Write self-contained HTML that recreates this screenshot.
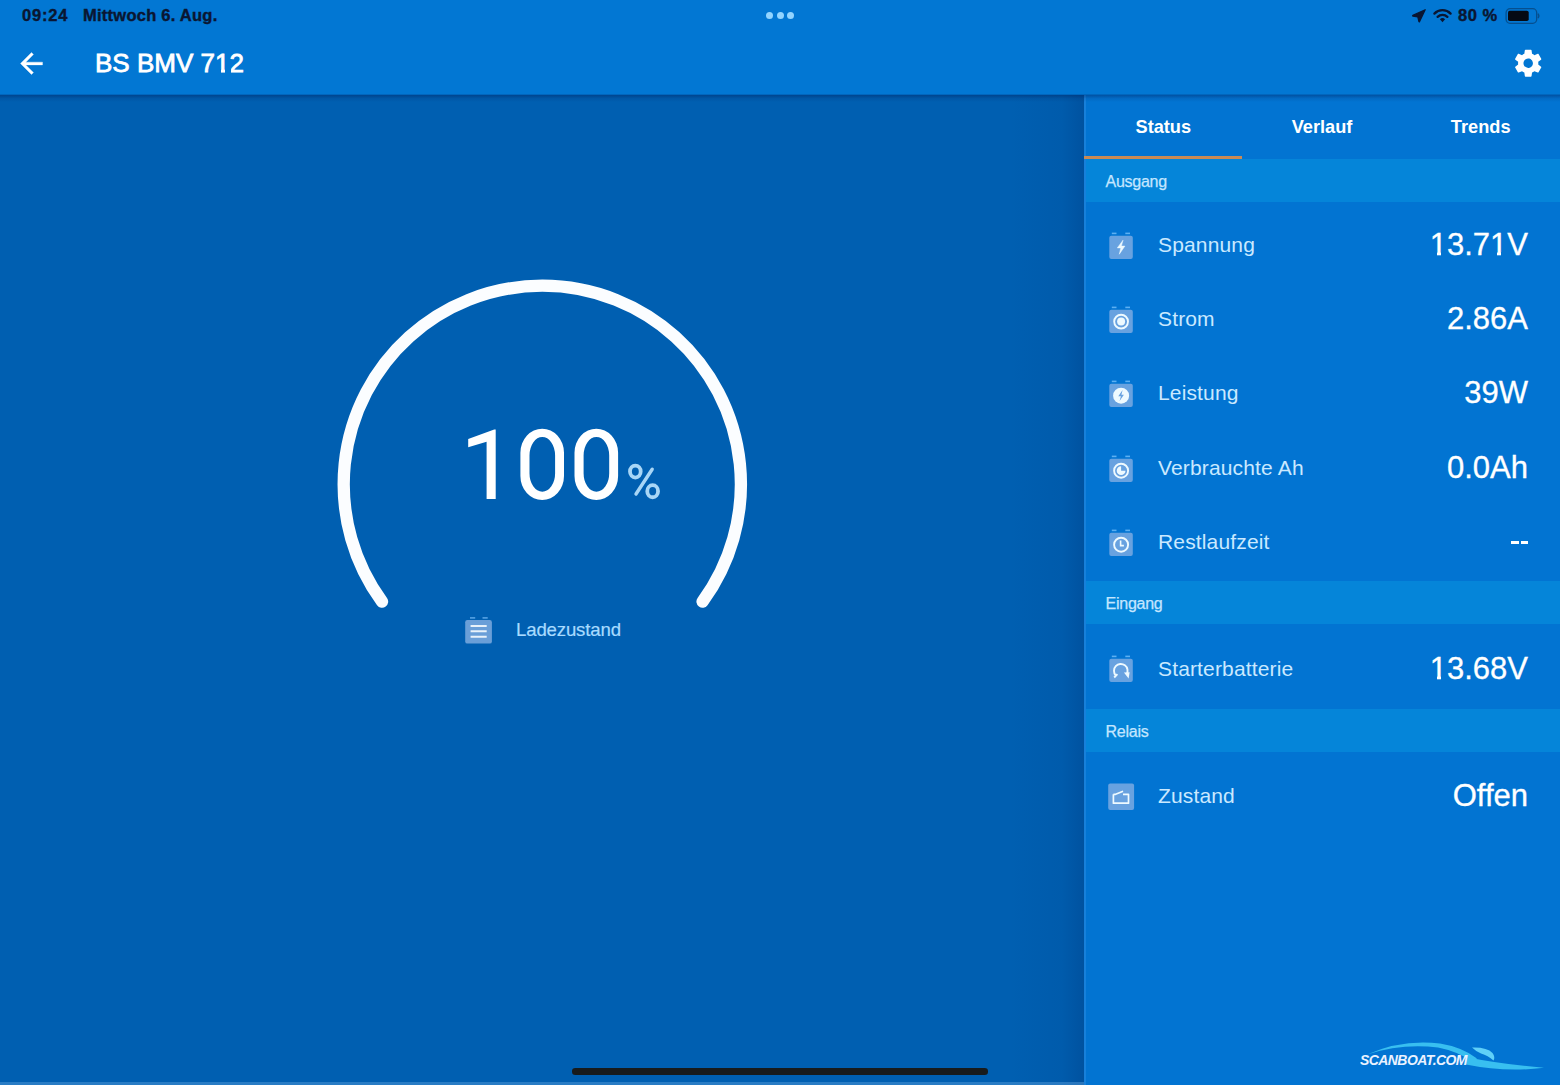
<!DOCTYPE html>
<html><head><meta charset="utf-8">
<style>
*{margin:0;padding:0;box-sizing:border-box}
html,body{width:1560px;height:1085px;overflow:hidden;background:#005fb1;font-family:"Liberation Sans",sans-serif}
.t{position:absolute;white-space:nowrap;line-height:0}
.b{position:absolute}
svg{position:absolute;overflow:visible}
</style></head><body>
<div class="b" style="left:0;top:95px;width:1084px;height:990px;background:#005fb1"></div>
<div class="b" style="left:1010px;top:95px;width:74px;height:990px;background:linear-gradient(to right,rgba(0,30,90,0),rgba(0,30,90,.06) 70%,rgba(0,30,90,.2))"></div>
<div class="b" style="left:1084px;top:95px;width:476px;height:990px;background:#0274d2"></div>
<div class="b" style="left:1084px;top:95px;width:1.5px;height:990px;background:rgba(110,180,250,.2)"></div>
<div class="b" style="left:0;top:1082px;width:1084px;height:3px;background:rgba(90,160,220,.45)"></div>
<div class="b" style="left:0;top:0;width:1560px;height:95px;background:#0277d3"></div>
<div class="b" style="left:0;top:94px;width:1560px;height:1px;background:rgba(0,30,90,.18)"></div>
<div class="b" style="left:0;top:95px;width:1560px;height:7px;background:linear-gradient(to bottom,rgba(0,30,90,.4),rgba(0,30,90,.12) 50%,rgba(0,30,90,0))"></div>
<div class="t" style="left:22px;top:15.28px;font-size:16.5px;color:#0a1632;font-weight:bold;letter-spacing:0.8px;-webkit-text-stroke:0.4px #0a1632">09:24</div>
<div class="t" style="left:83px;top:15.28px;font-size:16.5px;color:#0a1632;font-weight:bold;letter-spacing:0.25px;-webkit-text-stroke:0.4px #0a1632">Mittwoch 6. Aug.</div>
<div class="t" style="left:1458px;top:15.28px;font-size:16.5px;color:#0a1632;font-weight:bold;letter-spacing:0.5px;-webkit-text-stroke:0.4px #0a1632">80 %</div>
<div class="b" style="left:766.0px;top:12.2px;width:7px;height:7px;border-radius:50%;background:#92d4ff"></div>
<div class="b" style="left:776.5px;top:12.2px;width:7px;height:7px;border-radius:50%;background:#92d4ff"></div>
<div class="b" style="left:787.0px;top:12.2px;width:7px;height:7px;border-radius:50%;background:#92d4ff"></div>
<svg style="left:1410px;top:8px" width="18" height="16" viewBox="0 0 18 16"><path d="M15.2 1.7 L2.8 7.4 Q2.2 7.8 2.9 8.1 L7.8 8.9 L8.9 13.6 Q9.2 14.3 9.6 13.6 Z" fill="#0a1632" stroke="#0a1632" stroke-width="1.2" stroke-linejoin="round"/></svg>
<svg style="left:1432px;top:8px" width="21" height="16" viewBox="0 0 21 16"><path d="M10.5 14.2 L7.9 11.3 A3.8 3.8 0 0 1 13.1 11.3 Z" fill="#0a1632"/><path d="M5.6 8.9 A7 7 0 0 1 15.4 8.9" fill="none" stroke="#0a1632" stroke-width="2.3" stroke-linecap="round"/><path d="M2.4 5.6 A11.3 11.3 0 0 1 18.6 5.6" fill="none" stroke="#0a1632" stroke-width="2.3" stroke-linecap="round"/></svg>
<svg style="left:1504px;top:7px" width="40" height="18" viewBox="0 0 40 18"><rect x="2.1" y="1.7" width="30.6" height="14.6" rx="4" fill="none" stroke="rgba(10,30,60,.45)" stroke-width="1.3"/><rect x="4" y="3.8" width="20.7" height="10.2" rx="1.8" fill="#050a14"/><path d="M34.2 6.6 Q35.6 8.9 34.2 11.2" fill="none" stroke="rgba(10,30,60,.45)" stroke-width="1.4"/></svg>
<div class="t" style="left:95px;top:63.49px;font-size:26px;color:#fff;font-weight:normal;-webkit-text-stroke:0.8px #fff">BS BMV 712</div>
<svg style="left:14.5px;top:46.5px" width="33" height="33" viewBox="0 0 24 24"><path fill="#fff" stroke="#fff" stroke-width="0.25" d="M20 11H7.83l5.59-5.59L12 4l-8 8 8 8 1.41-1.41L7.83 13H20v-2z"/></svg>
<svg style="left:1512px;top:47.2px" width="32.4" height="32.4" viewBox="0 0 24 24"><path fill="#fff" d="M19.43 12.98c.04-.32.07-.64.07-.98s-.03-.66-.07-.98l2.11-1.65c.19-.15.24-.42.12-.64l-2-3.46c-.12-.22-.39-.3-.61-.22l-2.49 1c-.52-.4-1.08-.73-1.69-.98l-.38-2.65C14.460 2.18 14.25 2 14 2h-4c-.25 0-.46.18-.49.42l-.38 2.65c-.61.25-1.17.59-1.69.98l-2.49-1c-.23-.09-.49 0-.61.22l-2 3.46c-.13.22-.07.49.12.64l2.11 1.650c-.04.32-.07.65-.07.98s.03.66.07.98l-2.11 1.65c-.19.15-.24.42-.12.64l2 3.46c.12.22.39.3.61.22l2.49-1c.52.4 1.08.73 1.69.98l.38 2.65c.03.24.24.42.49.42h4c.25 0 .46-.18.49-.42l.38-2.65c.61-.25 1.17-.59 1.690-.98l2.49 1c.23.09.49 0 .61-.22l2-3.46c.12-.22.07-.49-.12-.64l-2.11-1.65zM12 15.5c-1.93 0-3.5-1.57-3.5-3.5s1.57-3.5 3.5-3.5 3.5 1.57 3.5 3.5-1.570 3.5-3.5 3.5z"/></svg>
<div class="t" style="left:863.3px;width:600px;text-align:center;top:126.69px;font-size:18.2px;color:#fff;font-weight:bold;">Status</div>
<div class="t" style="left:1022px;width:600px;text-align:center;top:126.69px;font-size:18.2px;color:#fff;font-weight:bold;">Verlauf</div>
<div class="t" style="left:1180.7px;width:600px;text-align:center;top:126.69px;font-size:18.2px;color:#fff;font-weight:bold;">Trends</div>
<div class="b" style="left:1084px;top:156px;width:158px;height:3px;background:#c98a55"></div>
<div class="b" style="left:1086px;top:159px;width:474px;height:42.5px;background:#0585d9"></div>
<div class="t" style="left:1105.5px;top:182.06px;font-size:16px;color:#c4e6ff;font-weight:normal;letter-spacing:-0.25px;-webkit-text-stroke:0.25px #c4e6ff">Ausgang</div>
<div class="b" style="left:1086px;top:581.2px;width:474px;height:42.39999999999998px;background:#0585d9"></div>
<div class="t" style="left:1105.5px;top:604.26px;font-size:16px;color:#c4e6ff;font-weight:normal;letter-spacing:-0.25px;-webkit-text-stroke:0.25px #c4e6ff">Eingang</div>
<div class="b" style="left:1086px;top:709.3px;width:474px;height:42.40000000000009px;background:#0585d9"></div>
<div class="t" style="left:1105.5px;top:732.36px;font-size:16px;color:#c4e6ff;font-weight:normal;letter-spacing:-0.25px;-webkit-text-stroke:0.25px #c4e6ff">Relais</div>
<svg style="left:1104px;top:227.7px" width="34" height="34" viewBox="0 0 34 34"><rect x="7.8" y="4.6" width="4.7" height="1.6" fill="#5cb0f2"/><rect x="21.3" y="4.6" width="4.7" height="1.6" fill="#5cb0f2"/><rect x="5.3" y="7.8" width="23.5" height="23.2" rx="2" fill="#68a2e0"/><path d="M19 12.2 L13.3 19.9 L16.8 19.9 L15.3 26.2 L20.9 18.1 L17.4 18.1 Z" fill="#eefaff" stroke="#eefaff" stroke-width="0.5" stroke-linejoin="round"/></svg>
<div class="t" style="left:1158px;top:244.72px;font-size:21px;color:#cae9ff;font-weight:normal;letter-spacing:0.15px">Spannung</div>
<div class="t" style="right:32px;top:244.96px;font-size:31px;color:#fff;font-weight:normal;-webkit-text-stroke:0.3px #fff">13.71V</div>
<svg style="left:1104px;top:302.09999999999997px" width="34" height="34" viewBox="0 0 34 34"><rect x="7.8" y="4.6" width="4.7" height="1.6" fill="#5cb0f2"/><rect x="21.3" y="4.6" width="4.7" height="1.6" fill="#5cb0f2"/><rect x="5.3" y="7.8" width="23.5" height="23.2" rx="2" fill="#68a2e0"/><circle cx="17.1" cy="19.6" r="6.9" fill="none" stroke="#eefaff" stroke-width="1.9"/><circle cx="17.1" cy="19.6" r="4" fill="#eefaff"/></svg>
<div class="t" style="left:1158px;top:319.12px;font-size:21px;color:#cae9ff;font-weight:normal;letter-spacing:0.15px">Strom</div>
<div class="t" style="right:32px;top:319.36px;font-size:31px;color:#fff;font-weight:normal;-webkit-text-stroke:0.3px #fff">2.86A</div>
<svg style="left:1104px;top:376.09999999999997px" width="34" height="34" viewBox="0 0 34 34"><rect x="7.8" y="4.6" width="4.7" height="1.6" fill="#5cb0f2"/><rect x="21.3" y="4.6" width="4.7" height="1.6" fill="#5cb0f2"/><rect x="5.3" y="7.8" width="23.5" height="23.2" rx="2" fill="#68a2e0"/><circle cx="17.1" cy="19.7" r="8" fill="#eefaff"/><path d="M18.6 14 L14.3 20.3 L16.9 20.3 L15.6 25 L19.9 18.8 L17.4 18.8 Z" fill="#68a2e0"/></svg>
<div class="t" style="left:1158px;top:393.12px;font-size:21px;color:#cae9ff;font-weight:normal;letter-spacing:0.15px">Leistung</div>
<div class="t" style="right:32px;top:393.36px;font-size:31px;color:#fff;font-weight:normal;-webkit-text-stroke:0.3px #fff">39W</div>
<svg style="left:1104px;top:450.9px" width="34" height="34" viewBox="0 0 34 34"><rect x="7.8" y="4.6" width="4.7" height="1.6" fill="#5cb0f2"/><rect x="21.3" y="4.6" width="4.7" height="1.6" fill="#5cb0f2"/><rect x="5.3" y="7.8" width="23.5" height="23.2" rx="2" fill="#68a2e0"/><circle cx="17.1" cy="19.7" r="7" fill="none" stroke="#eefaff" stroke-width="1.9"/><path d="M17.1 15.3 L17.1 19.7 L21.5 19.7 A4.4 4.4 0 1 1 17.1 15.3 Z" fill="#eefaff"/></svg>
<div class="t" style="left:1158px;top:467.92px;font-size:21px;color:#cae9ff;font-weight:normal;letter-spacing:0.15px">Verbrauchte Ah</div>
<div class="t" style="right:32px;top:468.16px;font-size:31px;color:#fff;font-weight:normal;-webkit-text-stroke:0.3px #fff">0.0Ah</div>
<svg style="left:1104px;top:524.7px" width="34" height="34" viewBox="0 0 34 34"><rect x="7.8" y="4.6" width="4.7" height="1.6" fill="#5cb0f2"/><rect x="21.3" y="4.6" width="4.7" height="1.6" fill="#5cb0f2"/><rect x="5.3" y="7.8" width="23.5" height="23.2" rx="2" fill="#68a2e0"/><circle cx="17.1" cy="19.7" r="7" fill="none" stroke="#eefaff" stroke-width="1.9"/><path d="M16.6 15.6 L16.6 20.6 L19.9 20.6" fill="none" stroke="#eefaff" stroke-width="1.6"/></svg>
<div class="t" style="left:1158px;top:541.72px;font-size:21px;color:#cae9ff;font-weight:normal;letter-spacing:0.15px">Restlaufzeit</div>
<div class="b" style="left:1511.4px;top:540.9px;width:7.6px;height:3.4px;background:#fff"></div><div class="b" style="left:1520.6px;top:540.9px;width:7.5px;height:3.4px;background:#fff"></div>
<svg style="left:1104px;top:650.8px" width="34" height="34" viewBox="0 0 34 34"><rect x="7.8" y="4.6" width="4.7" height="1.6" fill="#5cb0f2"/><rect x="21.3" y="4.6" width="4.7" height="1.6" fill="#5cb0f2"/><rect x="5.3" y="7.8" width="23.5" height="23.2" rx="2" fill="#68a2e0"/><path d="M11.7 24.3 A6.8 6.8 0 1 1 22.6 23.3" fill="none" stroke="#eefaff" stroke-width="1.9"/><path d="M19.9 21.6 L25.6 21.2 L24.6 27.4 Z" fill="#eefaff"/><path d="M10.2 26.5 L13.4 23.2" stroke="#eefaff" stroke-width="1.9"/></svg>
<div class="t" style="left:1158px;top:668.52px;font-size:21px;color:#cae9ff;font-weight:normal;letter-spacing:0.15px">Starterbatterie</div>
<div class="t" style="right:32px;top:668.76px;font-size:31px;color:#fff;font-weight:normal;-webkit-text-stroke:0.3px #fff">13.68V</div>
<svg style="left:1104px;top:778.5px" width="34" height="34" viewBox="0 0 34 34"><rect x="4.2" y="4.6" width="25.9" height="26.4" rx="2" fill="#68a2e0"/><path d="M9.4 15.3 L9.4 24.2 L24.5 24.2 L24.5 15.3 L19 15.3 M9.4 15.3 L11.6 15.3 L19.1 12.3" fill="none" stroke="#eefaff" stroke-width="1.7" stroke-linejoin="round"/></svg>
<div class="t" style="left:1158px;top:795.52px;font-size:21px;color:#cae9ff;font-weight:normal;letter-spacing:0.15px">Zustand</div>
<div class="t" style="right:32px;top:795.76px;font-size:31px;color:#fff;font-weight:normal;-webkit-text-stroke:0.3px #fff">Offen</div>
<svg style="left:0;top:0" width="1084" height="1085"><path d="M382.04 601.59 A198.6 198.6 0 1 1 702.56 601.59" fill="none" stroke="#fbfdff" stroke-width="12.3" stroke-linecap="round"/></svg>
<svg style="left:0;top:0" width="1084" height="1085"><path fill="#fff" d="M495.7 429.6 V499 H486.6 V441.8 L468.2 447.2 V439.1 L494.2 429.6 Z"/><path fill="#fff" fill-rule="evenodd" d="M542.20 428.70 H542.20 A21.8 24 0 0 1 564.00 452.70 V476.00 A21.8 24 0 0 1 542.20 500.00 H542.20 A21.8 24 0 0 1 520.40 476.00 V452.70 A21.8 24 0 0 1 542.20 428.70 Z M542.30 437.10 H542.30 A12.8 18.5 0 0 1 555.10 455.60 V473.20 A12.8 18.5 0 0 1 542.30 491.70 H542.30 A12.8 18.5 0 0 1 529.50 473.20 V455.60 A12.8 18.5 0 0 1 542.30 437.10 Z M596.30 428.70 H596.30 A21.8 24 0 0 1 618.10 452.70 V476.00 A21.8 24 0 0 1 596.30 500.00 H596.30 A21.8 24 0 0 1 574.50 476.00 V452.70 A21.8 24 0 0 1 596.30 428.70 Z M596.40 437.10 H596.40 A12.8 18.5 0 0 1 609.20 455.60 V473.20 A12.8 18.5 0 0 1 596.40 491.70 H596.40 A12.8 18.5 0 0 1 583.60 473.20 V455.60 A12.8 18.5 0 0 1 596.40 437.10 Z "/><ellipse cx="635.35" cy="471.6" rx="5.35" ry="5.95" fill="none" stroke="#a8d6f6" stroke-width="3.8"/><ellipse cx="652.65" cy="491.2" rx="5.4" ry="6.05" fill="none" stroke="#a8d6f6" stroke-width="3.8"/><path d="M652.2 469.2 L636 494" stroke="#a8d6f6" stroke-width="3.4" stroke-linecap="round"/></svg>
<svg style="left:455px;top:605px" width="45" height="45" viewBox="0 0 45 45"><rect x="15" y="12.1" width="5.2" height="1.6" fill="#55a2e4"/><rect x="27.5" y="12.1" width="5.2" height="1.6" fill="#55a2e4"/><rect x="10.2" y="15" width="26.7" height="23.6" rx="2.2" fill="#6a9fd8"/><path d="M15.6 21.1 H31.7 M15.6 26.3 H31.7 M15.6 31.7 H31.7" stroke="#e8f2fa" stroke-width="2"/></svg>
<div class="t" style="left:516px;top:630.26px;font-size:18.6px;color:#a8dbff;font-weight:normal;letter-spacing:-0.15px;-webkit-text-stroke:0.2px #a8dbff">Ladezustand</div>
<div class="b" style="left:572px;top:1068px;width:416px;height:6.6px;border-radius:3.3px;background:#181b1c"></div>
<svg style="left:1340px;top:1030px" width="220" height="55" viewBox="0 0 220 55"><path d="M27 24.5 Q62 9 100 13.5 Q122 17 137 28.5 L132 31 Q116 21 98 17.5 Q62 13 27 24.5 Z" fill="#38bff0"/><path d="M126 27 Q160 34 204 37.8 Q165 42.5 126 34.5 Z" fill="#38bff0"/><path d="M132 17.5 Q147 17 152.5 23 Q155.5 27 153.5 30.5 Q148 25.5 141 23.5 Q136 21.5 132 17.5 Z" fill="#5fd0f8"/></svg>
<div class="t" style="left:1360px;top:1059.93px;font-size:15.5px;color:#eaf2ff;font-weight:bold;font-style:italic;letter-spacing:-0.6px;transform:scaleX(0.9);transform-origin:left">SCANBOAT.COM</div>
<div class="b" style="left:1431px;top:252px;width:6px;height:4px;background:#0274d2"></div>
<div class="b" style="left:1441px;top:252px;width:6px;height:4px;background:#0274d2"></div>
<div class="b" style="left:1491px;top:252px;width:6px;height:4px;background:#0274d2"></div>
<div class="b" style="left:1501px;top:252px;width:7px;height:4px;background:#0274d2"></div>
<div class="b" style="left:1431px;top:676px;width:6px;height:4px;background:#0274d2"></div>
<div class="b" style="left:1441px;top:676px;width:6px;height:4px;background:#0274d2"></div>
<div class="b" style="left:215px;top:69px;width:6px;height:4px;background:#0277d3"></div>
<div class="b" style="left:225px;top:69px;width:6px;height:4px;background:#0277d3"></div>
</body></html>
